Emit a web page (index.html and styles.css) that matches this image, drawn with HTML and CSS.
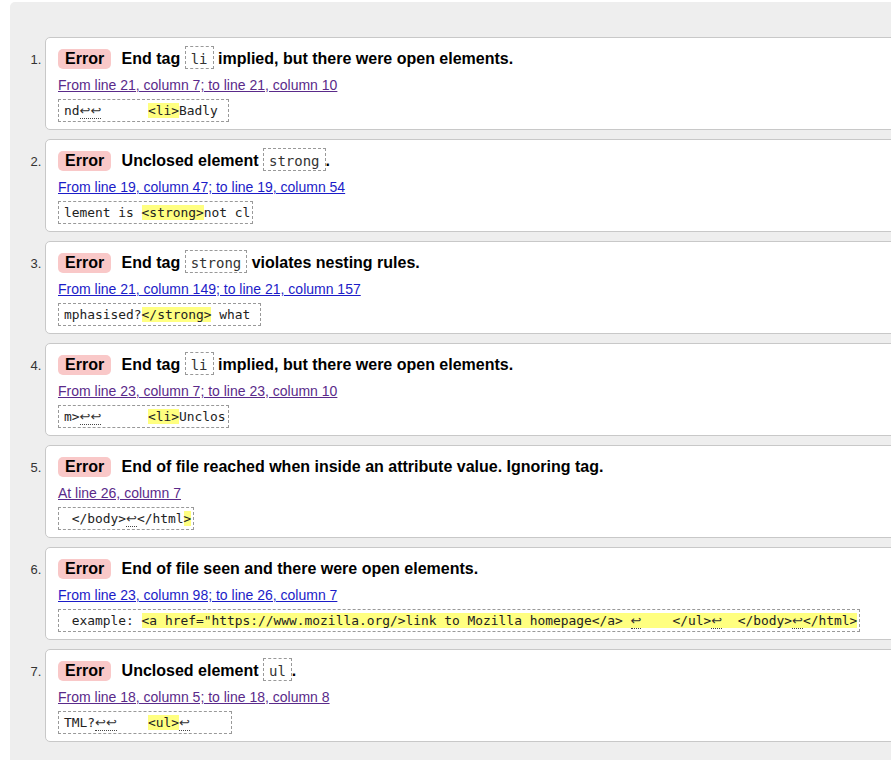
FILE: index.html
```html
<!DOCTYPE html>
<html lang="en">
<head>
<meta charset="utf-8">
<title>Validation results</title>
<link rel="stylesheet" href="styles.css">
</head>
<body>
<div class="results">
  <ol class="messages">
    <li class="card">
      <p class="msg"><strong class="badge">Error</strong> End tag <code class="tag">li</code> implied, but there were open elements.</p>
      <p class="loc"><a class="visited" href="#l1">From line 21, column 7; to line 21, column 10</a></p>
      <p class="xline"><code class="extract">nd<span class="lf">↩↩</span>      <b class="hl">&lt;li&gt;</b>Badly </code></p>
    </li>
    <li class="card">
      <p class="msg"><strong class="badge">Error</strong> Unclosed element <code class="tag">strong</code>.</p>
      <p class="loc"><a class="fresh" href="#l2">From line 19, column 47; to line 19, column 54</a></p>
      <p class="xline"><code class="extract">lement is <b class="hl">&lt;strong&gt;</b>not cl</code></p>
    </li>
    <li class="card">
      <p class="msg"><strong class="badge">Error</strong> End tag <code class="tag">strong</code> violates nesting rules.</p>
      <p class="loc"><a class="fresh" href="#l3">From line 21, column 149; to line 21, column 157</a></p>
      <p class="xline"><code class="extract">mphasised?<b class="hl">&lt;/strong&gt;</b> what </code></p>
    </li>
    <li class="card">
      <p class="msg"><strong class="badge">Error</strong> End tag <code class="tag">li</code> implied, but there were open elements.</p>
      <p class="loc"><a class="visited" href="#l4">From line 23, column 7; to line 23, column 10</a></p>
      <p class="xline"><code class="extract">m&gt;<span class="lf">↩↩</span>      <b class="hl">&lt;li&gt;</b>Unclos</code></p>
    </li>
    <li class="card">
      <p class="msg"><strong class="badge">Error</strong> End of file reached when inside an attribute value. Ignoring tag.</p>
      <p class="loc"><a class="visited" href="#l5">At line 26, column 7</a></p>
      <p class="xline"><code class="extract"> &lt;/body&gt;<span class="lf">↩</span>&lt;/html<b class="hl">&gt;</b></code></p>
    </li>
    <li class="card">
      <p class="msg"><strong class="badge">Error</strong> End of file seen and there were open elements.</p>
      <p class="loc"><a class="fresh" href="#l6">From line 23, column 98; to line 26, column 7</a></p>
      <p class="xline"><code class="extract"> example: <b class="hl">&lt;a href="https://www.mozilla.org/&gt;link to Mozilla homepage&lt;/a&gt; <span class="lf">↩</span>    &lt;/ul&gt;<span class="lf">↩</span>  &lt;/body&gt;<span class="lf">↩</span>&lt;/html&gt;</b></code></p>
    </li>
    <li class="card">
      <p class="msg"><strong class="badge">Error</strong> Unclosed element <code class="tag">ul</code>.</p>
      <p class="loc"><a class="visited" href="#l7">From line 18, column 5; to line 18, column 8</a></p>
      <p class="xline"><code class="extract">TML?<span class="lf">↩↩</span>    <b class="hl">&lt;ul&gt;</b><span class="lf">↩</span>     </code></p>
    </li>
  </ol>
</div>
</body>
</html>
```

FILE: styles.css
```css
html, body {
  margin: 0;
  padding: 0;
  overflow: hidden;
  background: #fff;
}

body {
  font-family: "Liberation Sans", Arial, sans-serif;
  color: #000;
}

.results {
  margin: 2px 0 0 10px;
  width: 1100px;
  min-height: 800px;
  background: #eeeeee;
  border-radius: 5px 0 0 0;
  padding-top: 35px;
}

.messages {
  margin: 0;
  padding: 0 0 0 35px;
  list-style: decimal outside;
}

.messages > li::marker {
  font-family: "Liberation Sans", Arial, sans-serif;
  font-size: 13px;
  color: #333;
}

.card {
  background: #fff;
  border: 1px solid #c8c8c8;
  border-radius: 5px;
  padding: 9px 12px 7px 12px;
  margin: 0 0 9px 0;
  height: 75px;
  box-sizing: content-box;
}

.msg {
  margin: 0;
  line-height: 24px;
  font-size: 16px;
  font-weight: bold;
  color: #000;
  white-space: nowrap;
}

.badge {
  display: inline-block;
  line-height: 18px;
  padding: 1px 7px;
  margin-right: 6px;
  background: #f9c8c8;
  border-radius: 5px;
  font-weight: bold;
}

.tag {
  font-family: "DejaVu Sans Mono", "Liberation Mono", monospace;
  font-size: 14px;
  font-weight: normal;
  color: #333;
  border: 1px dashed #999;
  padding: 4px 5px 1px 5px;
}

.loc {
  margin: 5px 0 0 0;
  font-size: 14px;
  line-height: 18px;
}

.loc a {
  text-decoration: underline;
}

.loc a.visited {
  color: #5a2a8a;
}

.loc a.fresh {
  color: #1c1cc8;
}

.xline {
  margin: 5px 0 0 0;
  line-height: 23px;
  height: 23px;
}

.extract {
  display: inline-block;
  box-sizing: border-box;
  height: 23px;
  font-family: "DejaVu Sans Mono", "Liberation Mono", monospace;
  font-size: 12.9px;
  line-height: 15px;
  color: #222;
  white-space: pre;
  border: 1px dashed #999;
  padding: 3px 2px 3px 5px;
  vertical-align: top;
}

.hl {
  font-weight: normal;
  background: #ffff80;
}

.lf {
  font-family: "DejaVu Sans", sans-serif;
  font-size: 13px;
  border-bottom: 1px dotted #444;
  color: #333;
}
```
